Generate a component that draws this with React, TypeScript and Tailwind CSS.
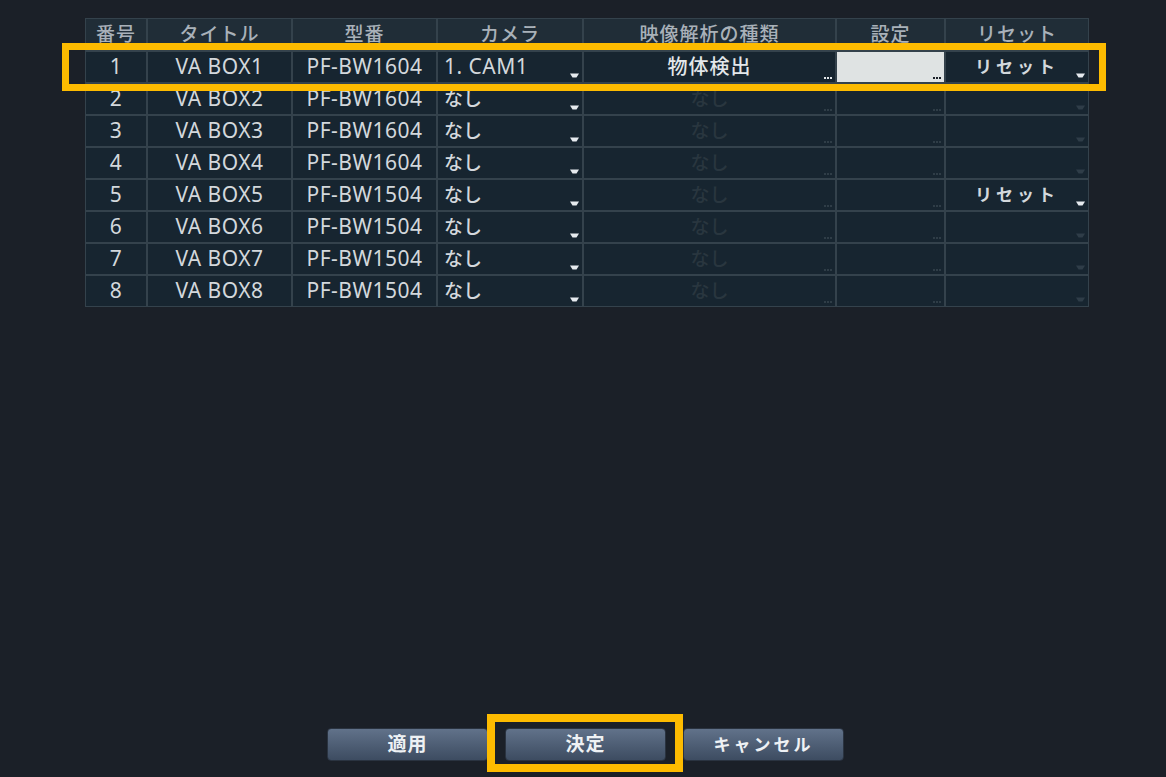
import React from "react";

type Row = {
  no: number;
  title: string;
  model: string;
  camera: string;
  analysis: string;
  active: boolean;
  reset: string;
};

const rows: Row[] = [
  { no: 1, title: "VA BOX1", model: "PF-BW1604", camera: "1. CAM1", analysis: "物体検出", active: true, reset: "リセット" },
  { no: 2, title: "VA BOX2", model: "PF-BW1604", camera: "なし", analysis: "なし", active: false, reset: "" },
  { no: 3, title: "VA BOX3", model: "PF-BW1604", camera: "なし", analysis: "なし", active: false, reset: "" },
  { no: 4, title: "VA BOX4", model: "PF-BW1604", camera: "なし", analysis: "なし", active: false, reset: "" },
  { no: 5, title: "VA BOX5", model: "PF-BW1504", camera: "なし", analysis: "なし", active: false, reset: "リセット" },
  { no: 6, title: "VA BOX6", model: "PF-BW1504", camera: "なし", analysis: "なし", active: false, reset: "" },
  { no: 7, title: "VA BOX7", model: "PF-BW1504", camera: "なし", analysis: "なし", active: false, reset: "" },
  { no: 8, title: "VA BOX8", model: "PF-BW1504", camera: "なし", analysis: "なし", active: false, reset: "" },
];

const headers = ["番号", "タイトル", "型番", "カメラ", "映像解析の種類", "設定", "リセット"];

const font = { fontFamily: '"Noto Sans", "Noto Sans CJK JP", sans-serif' };

// small pull-down marker at the bottom right of a select cell
const Arrow = ({ dim }: { dim?: boolean }) => (
  <svg
    className="absolute right-[3px] bottom-[4px]"
    width="9"
    height="5"
    viewBox="0 0 9 5"
  >
    <path d="M0 0.5 H9 L6.5 4.5 H2.5 Z" fill={dim ? "#2f3d48" : "#e6eaee"} />
  </svg>
);

// "..." marker for cells that open a sub menu
const Dots = ({ color }: { color: string }) => (
  <div className="absolute right-[3px] bottom-[3px] flex gap-[1px]">
    <span className="w-[2px] h-[2px]" style={{ background: color }} />
    <span className="w-[2px] h-[2px]" style={{ background: color }} />
    <span className="w-[2px] h-[2px]" style={{ background: color }} />
  </div>
);

const cell = "relative flex items-center bg-[#172530] h-[30px]";
const data = "justify-center text-[21px] tracking-[0.5px] text-[#d3d8dc]";

export default function App() {
  return (
    <div className="relative w-[1166px] h-[777px] bg-[#1b2028] flex flex-col" style={font}>
      <div className="ml-[85px] mt-[18px] w-[1004px] grid grid-cols-[60px_143px_143px_144px_251px_107px_142px] gap-[2px] p-[1px] bg-[#34424c]">
        {headers.map((h) => (
          <div
            key={h}
            className="h-[31px] bg-[#202d37] flex items-center justify-center text-[19px] font-medium text-[#a9b1b9] tracking-[1px]"
          >
            {h}
          </div>
        ))}
        {rows.map((r) => (
          <React.Fragment key={r.no}>
            <div className={`${cell} ${data}`}>{r.no}</div>
            <div className={`${cell} ${data}`}>{r.title}</div>
            <div className={`${cell} ${data}`}>{r.model}</div>
            <div
              className={`${cell} pl-[6px] text-[#d3d8dc] ${
                r.active ? "text-[21px] tracking-[0.5px]" : "text-[19px] font-medium"
              }`}
            >
              {r.camera}
              <Arrow />
            </div>
            <div
              className={`${cell} justify-center font-medium ${
                r.active ? "text-[20px] text-[#e3e7ea] tracking-[1px]" : "text-[19px] text-[#29363f]"
              }`}
            >
              {r.analysis}
              <Dots color={r.active ? "#e3e7ea" : "#2f3d47"} />
            </div>
            <div className={`${cell} ${r.active ? "!bg-[#dfe3e3]" : ""}`}>
              <Dots color={r.active ? "#1b2028" : "#2f3d47"} />
            </div>
            <div className={`${cell} justify-center text-[17px] font-bold tracking-[4px] text-[#d3d8dc]`}>
              {r.reset}
              <Arrow dim={!r.reset} />
            </div>
          </React.Fragment>
        ))}
      </div>

      <div className="mt-auto mb-[16px] ml-[327px] flex gap-[17px]">
        {["適用", "決定", "キャンセル"].map((b) => (
          <button
            key={b}
            className={`w-[161px] h-[33px] rounded-[4px] bg-gradient-to-b from-[#61728a] to-[#3d4c61] border border-[#2a3340] font-bold text-[#eef1f4] flex items-center justify-center ${
              b === "キャンセル" ? "text-[17px] tracking-[3px]" : "text-[19px] tracking-[1px]"
            }`}
          >
            {b}
          </button>
        ))}
      </div>

      {/* highlight frames */}
      <div className="absolute left-[62px] top-[43px] w-[1044px] h-[48px] border-[7px] border-[#fdbb00]" />
      <div className="absolute left-[487px] top-[714px] w-[196px] h-[58px] border-[8px] border-[#fdbb00]" />
    </div>
  );
}
